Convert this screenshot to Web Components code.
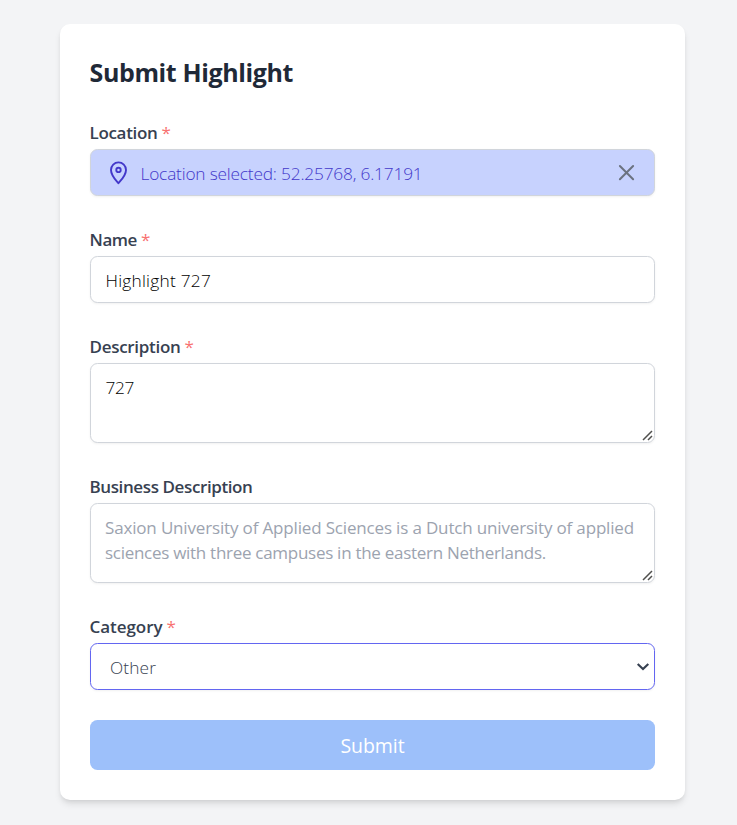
<!DOCTYPE html>
<html lang="en">
<head>
<meta charset="utf-8">
<title>Submit Highlight</title>
<style>
html,body{margin:0;background:#f3f4f6}
body{font-family:"Open Sans","Noto Sans",sans-serif;min-height:825px}
</style>
</head>
<body>
<highlight-page></highlight-page>
<script>
const define = (name, html, setup) => customElements.define(name, class extends HTMLElement {
  connectedCallback() {
    if (this.shadowRoot) return;
    this.attachShadow({mode: 'open'}).innerHTML = html;
    if (setup) setup(this, this.shadowRoot);
  }
});

// A single line of text whose tracking is tuned to a given line width.
define('fit-text', `<style>:host{display:inline-block;white-space:pre}</style><slot></slot>`, host => {
  const w = parseFloat(host.getAttribute('w'));
  if (!w) return;
  const n = host.textContent.length;
  host.style.letterSpacing = ((w - host.getBoundingClientRect().width) / n) + 'px';
});

define('form-card', `<style>
:host{display:block;box-sizing:border-box;width:625px;height:776px;margin:24px 0 0 60px;padding:30px;background:#fff;border-radius:10px;
box-shadow:0 5px 7.5px -1px rgba(0,0,0,.1),0 2.5px 5px -2.5px rgba(0,0,0,.1)}
</style><slot></slot>`);

define('form-title', `<style>
:host{display:block;height:37px;margin:0 0 29px -.5px;font-size:25px;font-weight:700;line-height:36px;color:#1f2937}
</style><slot></slot>`);

define('form-field', `<style>
:host{display:block;margin-bottom:31px}
:host([last]){margin-bottom:30px}
.label{display:flex;height:29px;margin-left:-.5px;line-height:25px;font-size:17px;font-weight:600;color:#374151}
.star{display:none;margin-left:4px;font-weight:500;color:#f87171}
:host([required]) .star{display:block}
</style><div class="label"><slot name="label"></slot><span class="star">*</span></div><slot></slot>`);

define('field-box', `<style>
:host{display:block;box-sizing:border-box;position:relative;height:47px;padding:10px 14.5px;border:1px solid #d1d5db;border-radius:7.5px;
background:#fff;color:#000;font-size:17.3px;font-weight:300;line-height:27px;box-shadow:0 1px 2.5px rgba(0,0,0,.06)}
:host([kind=area]){height:80px;line-height:25px;padding-top:11px}
:host([kind=select]){display:flex;justify-content:space-between;border-color:#6366f1;color:#374151;padding:10px 4px 10px 19px}
:host([kind=place]){display:flex;align-items:center;background:#c7d2fe;color:#4338ca;padding:10px 15px 9px}
:host([muted]){color:#9ca3af;font-weight:400;font-size:17px;padding-left:14px}
</style><slot></slot>`);

define('resize-grip', `<style>
:host{position:absolute;right:0;bottom:1px;width:12px;height:12px}svg{display:block}
</style><svg width="12" height="12" viewBox="0 0 12 12" fill="none" stroke="#50504e" stroke-width="1.5"><path d="M1 11 10 2M6 11 10 7"/></svg>`);

define('pin-icon', `<style>
:host{display:block;width:25px;height:25px;margin:-1px 9.5px 0 0}svg{display:block}
</style><svg width="25" height="25" viewBox="0 0 25 25" fill="none" stroke="#4338ca" stroke-width="1.9" stroke-linejoin="round"><path d="M12.4 23.2C10 20.3 5 15.5 5 9.900a7.500 7.500 0 0 1 15 0c0 5.600-5.200 10.400-7.600 13.300Z"/><circle cx="12.500" cy="9.900" r="2.200" stroke-width="1.900"/></svg>`);

define('close-icon', `<style>
:host{display:block;width:25px;height:25px;margin-left:auto}svg{display:block}
</style><svg width="25" height="25" viewBox="0 0 25 25" fill="none" stroke="#6b7280" stroke-width="2" stroke-linecap="round"><path d="m5.900 5 13.200 13.200M19.100 5 5.900 18.200"/></svg>`);

define('chevron-icon', `<style>
:host{display:block;width:14px;height:27px}svg{display:block}
</style><svg width="14" height="27" viewBox="0 0 14 27" fill="none" stroke="#374151" stroke-width="2.1"><path d="m1.700 10 5.300 5.100L12.300 10"/></svg>`);

define('submit-button', `<style>
:host{display:flex;justify-content:center;height:50px;border-radius:7.5px;background:#9dc0fa;color:#fff;font-size:19.5px;line-height:52px}
</style><slot></slot>`);

define('highlight-page', `<style>:host{display:flow-root}</style>
<form-card>
<form-title><fit-text w="203.5">Submit Highlight</fit-text></form-title>
<form-field required><fit-text slot="label" w="68">Location</fit-text>
<field-box kind="place"><pin-icon></pin-icon><fit-text w="282">Location selected: 52.25768, 6.17191</fit-text><close-icon></close-icon></field-box></form-field>
<form-field required><fit-text slot="label" w="47.5">Name</fit-text>
<field-box><fit-text w="105.5">Highlight 727</fit-text></field-box></form-field>
<form-field required><fit-text slot="label" w="91">Description</fit-text>
<field-box kind="area"><fit-text w="28.5">727</fit-text><resize-grip></resize-grip></field-box></form-field>
<form-field><fit-text slot="label" w="163">Business Description</fit-text>
<field-box kind="area" muted><fit-text w="529">Saxion University of Applied Sciences is a Dutch university of applied</fit-text><br><fit-text w="441">sciences with three campuses in the eastern Netherlands.</fit-text><resize-grip></resize-grip></field-box></form-field>
<form-field required last><fit-text slot="label" w="73">Category</fit-text>
<field-box kind="select"><fit-text w="46">Other</fit-text><chevron-icon></chevron-icon></field-box></form-field>
<submit-button><fit-text w="64">Submit</fit-text></submit-button>
</form-card>`);
</script>
</body>
</html>
